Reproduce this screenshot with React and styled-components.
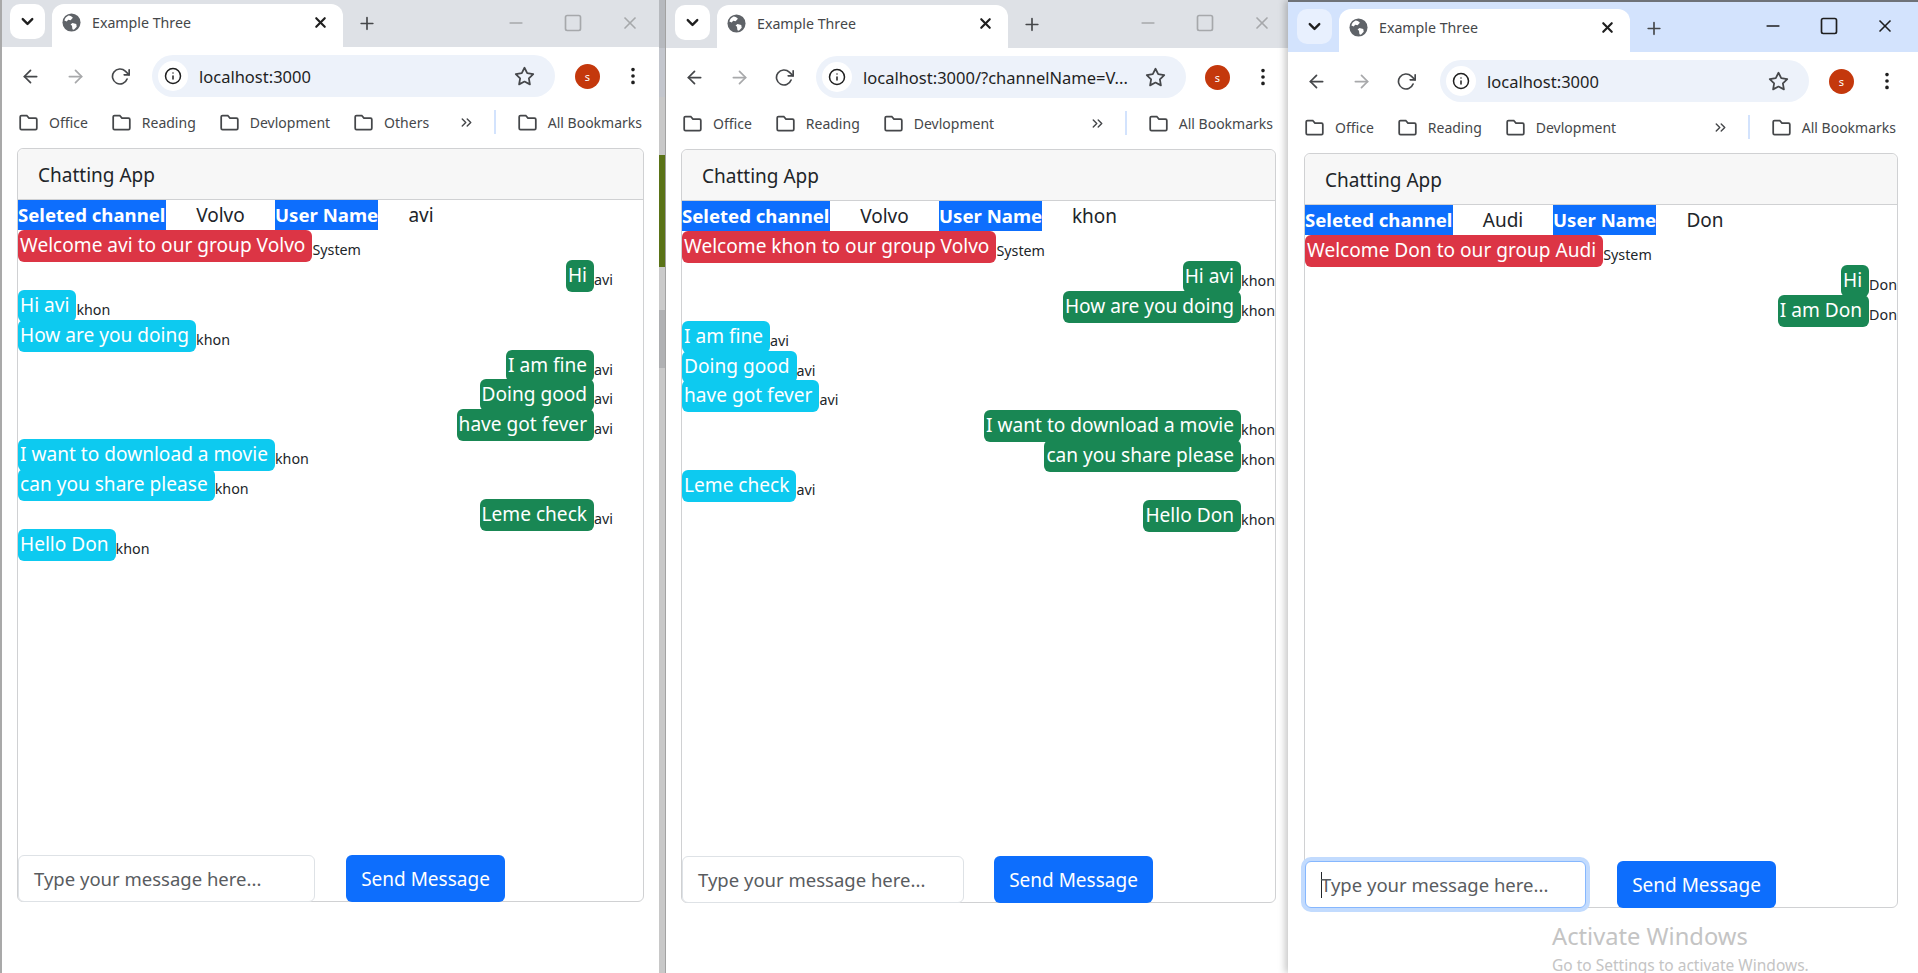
import React from 'react';
import styled, { createGlobalStyle } from 'styled-components';
import { FiChevronDown, FiX, FiPlus, FiArrowLeft, FiArrowRight, FiRotateCw, FiInfo, FiStar, FiMoreVertical, FiChevronsRight, FiMinus, FiSquare } from 'react-icons/fi';

const GlobalStyle = createGlobalStyle`
  html, body {
    margin: 0;
    padding: 0;
    height: 973px;
    overflow: hidden;
    background: #fff;
    font-family: "Noto Sans", "Open Sans", sans-serif;
  }
  * { box-sizing: border-box; }
`;

const Desktop = styled.div`
  display: flex;
  width: 1918px;
  height: 973px;
  overflow: hidden;
`;

const Window = styled.div`
  flex: 0 0 ${(p) => p.$width}px;
  height: 973px;
  display: flex;
  flex-direction: column;
  background: #fff;
  border-left: ${(p) => p.$edge}px solid #a9a9a9;
  border-top: ${(p) => (p.$active ? '2px solid #6e7278' : '0')};
  box-shadow: ${(p) => (p.$active ? '-3px 0 7px rgba(0, 0, 0, 0.22)' : 'none')};
  overflow: hidden;
  position: relative;
  z-index: ${(p) => (p.$active ? 2 : 1)};
`;

const BackStrip = styled.div`
  flex: 0 0 7px;
  height: 973px;
  border-right: 1px solid #a2a2a2;
  background: linear-gradient(
    to bottom,
    #b6b9be 0,
    #b6b9be 48px,
    #c3c6cd 48px,
    #c3c6cd 97px,
    #c8c8c8 97px,
    #c8c8c8 155px,
    #5a7317 155px,
    #5a7317 267px,
    #cacaca 267px,
    #cacaca 310px,
    #b0b1b3 310px,
    #b0b1b3 368px,
    #c8c8c8 368px
  );
`;

const TabStrip = styled.div`
  height: ${(p) => p.$height}px;
  flex: none;
  display: flex;
  align-items: flex-end;
  background: ${(p) => (p.$active ? '#d3e3fd' : '#dee1e6')};
  padding-left: ${(p) => p.$pad}px;
`;

const GroupButton = styled.div`
  width: 35px;
  height: 35px;
  margin-bottom: 8px;
  border-radius: 10px;
  background: ${(p) => (p.$active ? '#e8f0fe' : '#fff')};
  color: #1f1f1f;
  display: flex;
  align-items: center;
  justify-content: center;
  font-size: 19px;

  svg {
    stroke-width: 3;
  }
`;

const Tab = styled.div`
  width: 291px;
  height: 43px;
  margin-left: ${(p) => p.$gap}px;
  background: #fff;
  border-radius: 12px 12px 0 0;
  display: flex;
  align-items: center;
  padding: 0 14px 7px 10px;
  color: #45474a;
  font-size: 14.2px;
  gap: 11px;
`;

const Globe = styled.svg`
  width: 19px;
  height: 19px;
  flex: none;
`;

const TabTitle = styled.span`
  flex: 1;
  white-space: nowrap;
`;

const TabClose = styled.span`
  color: #1f1f1f;
  font-size: 17px;
  display: flex;

  svg {
    stroke-width: 3;
  }
`;

const NewTab = styled.div`
  width: 20px;
  margin: 0 0 13px 14px;
  color: #45474a;
  font-size: 21px;
  display: flex;
`;

const WindowControls = styled.div`
  margin-left: auto;
  height: 100%;
  display: flex;
  align-items: center;
  gap: ${(p) => p.$gap}px;
  padding: 0 ${(p) => p.$right}px 2px 0;
  color: ${(p) => (p.$active ? '#1f1f1f' : '#a6a8ab')};
  font-size: 20px;
`;

const ToolBar = styled.div`
  height: 58px;
  flex: none;
  display: flex;
  align-items: center;
  padding: 0 ${(p) => p.$right}px 0 18px;
  color: #45474a;
  font-size: 21px;
`;

const NavIcon = styled.span`
  display: flex;
  width: ${(p) => p.$width || 45}px;
  color: ${(p) => (p.$off ? '#a8a9ab' : '#45474a')};
`;

const Omnibox = styled.div`
  flex: 0 0 ${(p) => p.$width}px;
  height: 42px;
  margin-left: ${(p) => p.$left}px;
  border-radius: 21px;
  background: #edf2fa;
  display: flex;
  align-items: center;
  padding: 0 20px 0 6px;
`;

const InfoBadge = styled.span`
  width: 30px;
  height: 30px;
  border-radius: 50%;
  background: #fff;
  color: #1f1f1f;
  display: flex;
  align-items: center;
  justify-content: center;
  font-size: 18px;
  flex: none;
`;

const Url = styled.span`
  flex: 1;
  margin-left: 11px;
  font-size: 16.5px;
  color: #1f1f1f;
  white-space: nowrap;
`;

const Avatar = styled.span`
  width: 25px;
  height: 25px;
  margin-left: auto;
  margin-right: 22px;
  border-radius: 50%;
  background: #c4380c;
  color: #fff;
  font-size: 11px;
  display: flex;
  align-items: center;
  justify-content: center;
  flex: none;
`;

const MenuDots = styled.span`
  display: flex;
  font-size: 22px;
  color: #1f1f1f;
`;

const BookmarkBar = styled.div`
  height: 34px;
  flex: none;
  display: flex;
  align-items: center;
  padding: 0 ${(p) => p.$right}px 0 16px;
  font-size: 14px;
  color: #45474a;
`;

const Bookmark = styled.span`
  display: flex;
  align-items: center;
  gap: 10px;
  margin-right: ${(p) => (p.$last ? 0 : 23)}px;
  white-space: nowrap;
  font-size: 14px;
`;

const FolderSvg = styled.svg`
  width: 21px;
  height: 21px;
  flex: none;
  fill: none;
  stroke: #45474a;
  stroke-width: 2;
`;

const Overflow = styled.span`
  margin-left: auto;
  display: flex;
  font-size: 17px;
`;

const Divider = styled.span`
  width: 2px;
  height: 24px;
  margin: 0 21px 0 19px;
  background: #d3e3fd;
`;

const Card = styled.div`
  margin: 9px ${(p) => p.$right}px 0 ${(p) => p.$left}px;
  height: ${(p) => p.$height}px;
  border: 1px solid #d0d1d3;
  border-radius: 6px;
  display: flex;
  flex-direction: column;
  position: relative;
`;

const CardHeader = styled.div`
  height: 51px;
  flex: none;
  background: #f7f7f7;
  border-bottom: 1px solid #d0d1d3;
  border-radius: 6px 6px 0 0;
  padding: 2px 20px 0;
  display: flex;
  align-items: center;
  font-size: 19px;
  color: #212529;
`;

const InfoRow = styled.div`
  height: 30px;
  flex: none;
  display: flex;
  align-items: center;
`;

const InfoLabel = styled.span`
  width: ${(p) => p.$width}px;
  height: 30px;
  background: #0d6efd;
  color: #fff;
  font-weight: 700;
  font-size: 18.6px;
  line-height: 29px;
  white-space: nowrap;
  overflow: hidden;
`;

const InfoValue = styled.span`
  width: ${(p) => p.$width}px;
  font-size: 19px;
  text-align: center;
  color: #212529;
`;

const Messages = styled.div`
  flex: 1;
  display: flex;
  flex-direction: column;
`;

const MessageRow = styled.div`
  height: 29.9px;
  flex: none;
  display: flex;
  align-items: flex-start;
  justify-content: ${(p) => (p.$mine ? 'flex-end' : 'flex-start')};
  padding-right: ${(p) => (p.$mine ? p.$reserve : 0)}px;
`;

const Bubble = styled.span`
  height: 32px;
  padding: 0 7px 0 2px;
  border-radius: 6px;
  font-size: 19.1px;
  line-height: 31px;
  color: #fff;
  white-space: nowrap;
  background: ${(p) => p.$bg};
`;

const Sender = styled.span`
  margin-top: 11px;
  font-size: 14.3px;
  line-height: 18px;
  color: #212529;
`;

const Composer = styled.div`
  height: 47px;
  flex: none;
  display: flex;
  align-items: stretch;
  margin-bottom: -1px;
`;

const MessageInput = styled.div`
  width: ${(p) => p.$width}px;
  border: 1px solid ${(p) => (p.$focused ? '#86b7fe' : '#dee2e6')};
  border-radius: 6px;
  background: #fff;
  box-shadow: ${(p) => (p.$focused ? '0 0 0 4px #c2dbfe' : 'none')};
  display: flex;
  align-items: center;
  padding-left: 15px;
  font-size: 18.5px;
  color: #595c5f;
  white-space: nowrap;
  position: relative;
  z-index: 1;
`;

const Caret = styled.span`
  width: 1px;
  height: 26px;
  background: #212529;
  margin-right: -1px;
`;

const SendButton = styled.div`
  width: 159px;
  margin-left: ${(p) => p.$gap}px;
  border-radius: 6px;
  background: #0d6efd;
  color: #fff;
  font-size: 19px;
  display: flex;
  align-items: center;
  justify-content: center;
  white-space: nowrap;
`;

const Watermark = styled.div`
  position: absolute;
  left: 264px;
  top: 919px;
  color: #c4c4c4;
  font-size: 23.7px;
  line-height: 30px;
  white-space: nowrap;
`;

const WatermarkHint = styled.div`
  font-size: 15.5px;
  line-height: 22px;
  margin-top: 3px;
`;

const GREEN = '#198754';
const CYAN = '#0dcaf0';
const RED = '#dc3545';

const GlobeIcon = () => (
  <Globe viewBox="0 0 20 20">
    <circle cx="10" cy="10" r="9.5" fill="#5f6368" />
    <path d="M7 2.500c2 .5 3.500 1 4.500 2.500L9 7.500 6.500 7 5 9 2.500 8C3 5.500 4.500 3.500 7 2.500zM11 10.500l4 1 .5 3-3 3-1.500-.5-.5-3.500-1.500-1.500z" fill="#fff" />
  </Globe>
);

const FolderIcon = () => (
  <FolderSvg viewBox="0 0 24 24">
    <path d="M2.500 5.500A1.500 1.500 0 0 1 4 4h6l2.500 3H20a1.500 1.500 0 0 1 1.500 1.500v10A1.500 1.500 0 0 1 20 20H4a1.500 1.500 0 0 1-1.500-1.500z" />
  </FolderSvg>
);

const windows = [
  {
    width: 659, edge: 2, strip: 47, stripPad: 8, tabGap: 7, omni: 403, omniLeft: 22, right: 15,
    url: 'localhost:3000', others: true, cardLeft: 15, cardRight: 15, cardHeight: 754,
    channel: 'Volvo', user: 'avi', reserve: 30, channelWidth: 109, userWidth: 86,
    inputWidth: 297, sendGap: 31, ctlGap: 37, ctlRight: 19, markRight: 17,
    messages: [
      ['Welcome avi to our group Volvo', 'System', 'sys'],
      ['Hi', 'avi', 'me'],
      ['Hi avi', 'khon', 'other'],
      ['How are you doing', 'khon', 'other'],
      ['I am fine', 'avi', 'me'],
      ['Doing good', 'avi', 'me'],
      ['have got fever', 'avi', 'me'],
      ['I want to download a movie', 'khon', 'other'],
      ['can you share please', 'khon', 'other'],
      ['Leme check', 'avi', 'me'],
      ['Hello Don', 'khon', 'other'],
    ],
  },
  {
    width: 622, edge: 0, strip: 48, stripPad: 9, tabGap: 7, omni: 370, omniLeft: 22, right: 14,
    url: 'localhost:3000/?channelName=V...', others: false, cardLeft: 15, cardRight: 12, cardHeight: 754,
    channel: 'Volvo', user: 'khon', reserve: 0, channelWidth: 109, userWidth: 105,
    inputWidth: 282, sendGap: 30, ctlGap: 37, ctlRight: 16, markRight: 15,
    messages: [
      ['Welcome khon to our group Volvo', 'System', 'sys'],
      ['Hi avi', 'khon', 'me'],
      ['How are you doing', 'khon', 'me'],
      ['I am fine', 'avi', 'other'],
      ['Doing good', 'avi', 'other'],
      ['have got fever', 'avi', 'other'],
      ['I want to download a movie', 'khon', 'me'],
      ['can you share please', 'khon', 'me'],
      ['Leme check', 'avi', 'other'],
      ['Hello Don', 'khon', 'me'],
    ],
  },
  {
    width: 630, edge: 0, strip: 50, stripPad: 9, tabGap: 7, omni: 369, omniLeft: 24, right: 20, active: true,
    url: 'localhost:3000', others: false, cardLeft: 16, cardRight: 20, cardHeight: 755,
    channel: 'Audi', user: 'Don', reserve: 0, channelWidth: 100, userWidth: 98,
    inputWidth: 281, sendGap: 31, focused: true, ctlGap: 36, ctlRight: 23, markRight: 22,
    messages: [
      ['Welcome Don to our group Audi', 'System', 'sys'],
      ['Hi', 'Don', 'me'],
      ['I am Don', 'Don', 'me'],
    ],
  },
];

const bubbleColour = { sys: RED, me: GREEN, other: CYAN };

const ChromeWindow = ({ win }) => (
  <Window $width={win.width} $edge={win.edge} $active={win.active}>
    <TabStrip $height={win.strip} $active={win.active} $pad={win.stripPad}>
      <GroupButton $active={win.active}><FiChevronDown /></GroupButton>
      <Tab $gap={win.tabGap}>
        <GlobeIcon />
        <TabTitle>Example Three</TabTitle>
        <TabClose><FiX /></TabClose>
      </Tab>
      <NewTab><FiPlus /></NewTab>
      <WindowControls $active={win.active} $gap={win.ctlGap} $right={win.ctlRight}>
        <FiMinus /><FiSquare /><FiX />
      </WindowControls>
    </TabStrip>
    <ToolBar $right={win.right}>
      <NavIcon><FiArrowLeft /></NavIcon>
      <NavIcon $off><FiArrowRight /></NavIcon>
      <NavIcon $width={20}><FiRotateCw /></NavIcon>
      <Omnibox $width={win.omni} $left={win.omniLeft}>
        <InfoBadge><FiInfo /></InfoBadge>
        <Url>{win.url}</Url>
        <FiStar />
      </Omnibox>
      <Avatar>s</Avatar>
      <MenuDots><FiMoreVertical /></MenuDots>
    </ToolBar>
    <BookmarkBar $right={win.markRight}>
      <Bookmark><FolderIcon />Office</Bookmark>
      <Bookmark><FolderIcon />Reading</Bookmark>
      <Bookmark><FolderIcon />Devlopment</Bookmark>
      {win.others && <Bookmark><FolderIcon />Others</Bookmark>}
      <Overflow><FiChevronsRight /></Overflow>
      <Divider />
      <Bookmark $last><FolderIcon />All Bookmarks</Bookmark>
    </BookmarkBar>
    <Card $left={win.cardLeft} $right={win.cardRight} $height={win.cardHeight}>
      <CardHeader>Chatting App</CardHeader>
      <InfoRow>
        <InfoLabel $width={148}>Seleted channel</InfoLabel>
        <InfoValue $width={win.channelWidth}>{win.channel}</InfoValue>
        <InfoLabel $width={103}>User Name</InfoLabel>
        <InfoValue $width={win.userWidth}>{win.user}</InfoValue>
      </InfoRow>
      <Messages>
        {win.messages.map(([text, from, kind], i) => (
          <MessageRow key={i} $mine={kind === 'me'} $reserve={win.reserve}>
            <Bubble $bg={bubbleColour[kind]}>{text}</Bubble>
            <Sender>{from}</Sender>
          </MessageRow>
        ))}
      </Messages>
      <Composer>
        <MessageInput $width={win.inputWidth} $focused={win.focused}>
          {win.focused && <Caret />}
          Type your message here...
        </MessageInput>
        <SendButton $gap={win.sendGap}>Send Message</SendButton>
      </Composer>
    </Card>
    {win.active && (
      <Watermark>
        Activate Windows
        <WatermarkHint>Go to Settings to activate Windows.</WatermarkHint>
      </Watermark>
    )}
  </Window>
);

const App = () => (
  <>
    <GlobalStyle />
    <Desktop>
      <ChromeWindow win={windows[0]} />
      <BackStrip />
      <ChromeWindow win={windows[1]} />
      <ChromeWindow win={windows[2]} />
    </Desktop>
  </>
);

export default App;
